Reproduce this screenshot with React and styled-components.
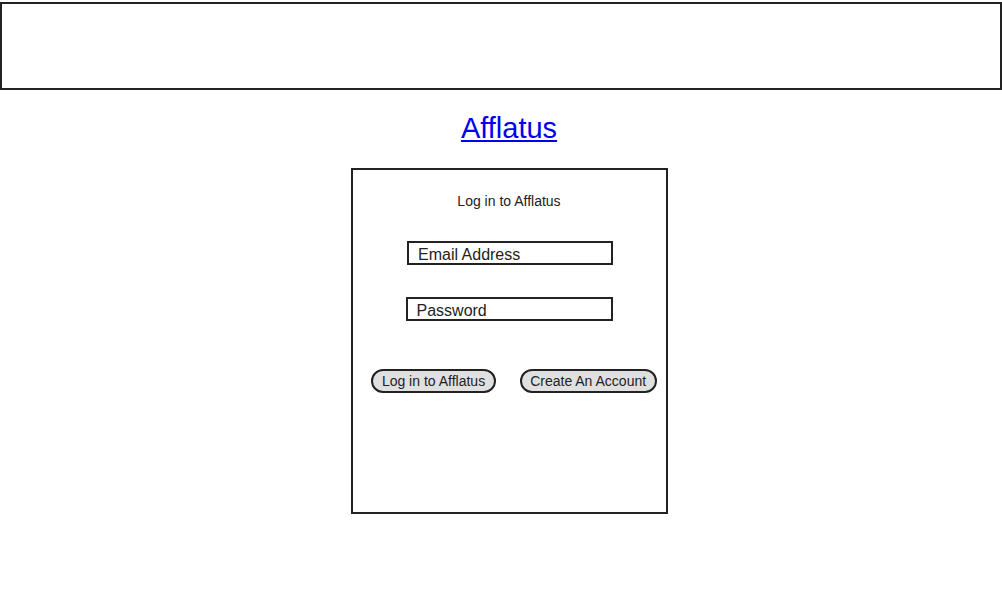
import React from "react";
import styled, { createGlobalStyle } from "styled-components";

const GlobalStyle = createGlobalStyle`
  body {
    margin: 0;
    background: #fff;
    font-family: "Liberation Sans", Arial, sans-serif;
    color: #222;
  }
`;

const App = () => {
  return (
    <>
      <GlobalStyle />
      <Page>
        <TopBar />
        <Main>
          <Title href="#">Afflatus</Title>
          <Card>
            <CardHeading>Log in to Afflatus</CardHeading>
            <Field $width={206} $shift={1} placeholder="Email Address" />
            <Field $width={207} $shift={0} type="password" placeholder="Password" />
            <ButtonRow>
              <Pill>Log in to Afflatus</Pill>
              <Pill>Create An Account</Pill>
            </ButtonRow>
          </Card>
        </Main>
      </Page>
    </>
  );
};
export default App;

const Page = styled.div`
  width: 1002px;
  padding-top: 2px;
`;

const TopBar = styled.header`
  box-sizing: border-box;
  width: 1002px;
  height: 88px;
  border: 2px solid #222;
  background: #fff;
`;

const Main = styled.main`
  display: flex;
  flex-direction: column;
  align-items: center;
  padding-left: 16px;
`;

const Title = styled.a`
  margin-top: 22px;
  font-size: 29px;
  line-height: 32px;
  color: #0000ee;
  text-decoration: underline;
`;

const Card = styled.section`
  box-sizing: border-box;
  width: 317px;
  height: 346px;
  margin-top: 24px;
  border: 2px solid #222;
  display: flex;
  flex-direction: column;
  align-items: center;
  padding-top: 23px;
`;

const CardHeading = styled.div`
  font-size: 14px;
  line-height: 16px;
  color: #222;
  margin-bottom: 32px;
`;

const Field = styled.input`
  box-sizing: border-box;
  width: ${(p) => p.$width}px;
  height: 24px;
  margin: 0 0 32px ${(p) => p.$shift * 2}px;
  padding: 3px 9px 0;
  border: 2px solid #222;
  border-radius: 0;
  outline: none;
  font-family: "Liberation Sans", Arial, sans-serif;
  font-size: 16px;
  color: #222;
  background: #fff;

  &::placeholder {
    color: #222;
    opacity: 1;
  }
`;

const ButtonRow = styled.div`
  display: flex;
  gap: 24px;
  margin-top: 16px;
  margin-left: 10px;
`;

const Pill = styled.button`
  box-sizing: border-box;
  height: 24px;
  padding: 0 8.5px 1px;
  border: 2px solid #222;
  border-radius: 12px;
  background: #e0e0e0;
  font-family: "Liberation Sans", Arial, sans-serif;
  font-size: 14px;
  color: #222;
  cursor: pointer;
`;
